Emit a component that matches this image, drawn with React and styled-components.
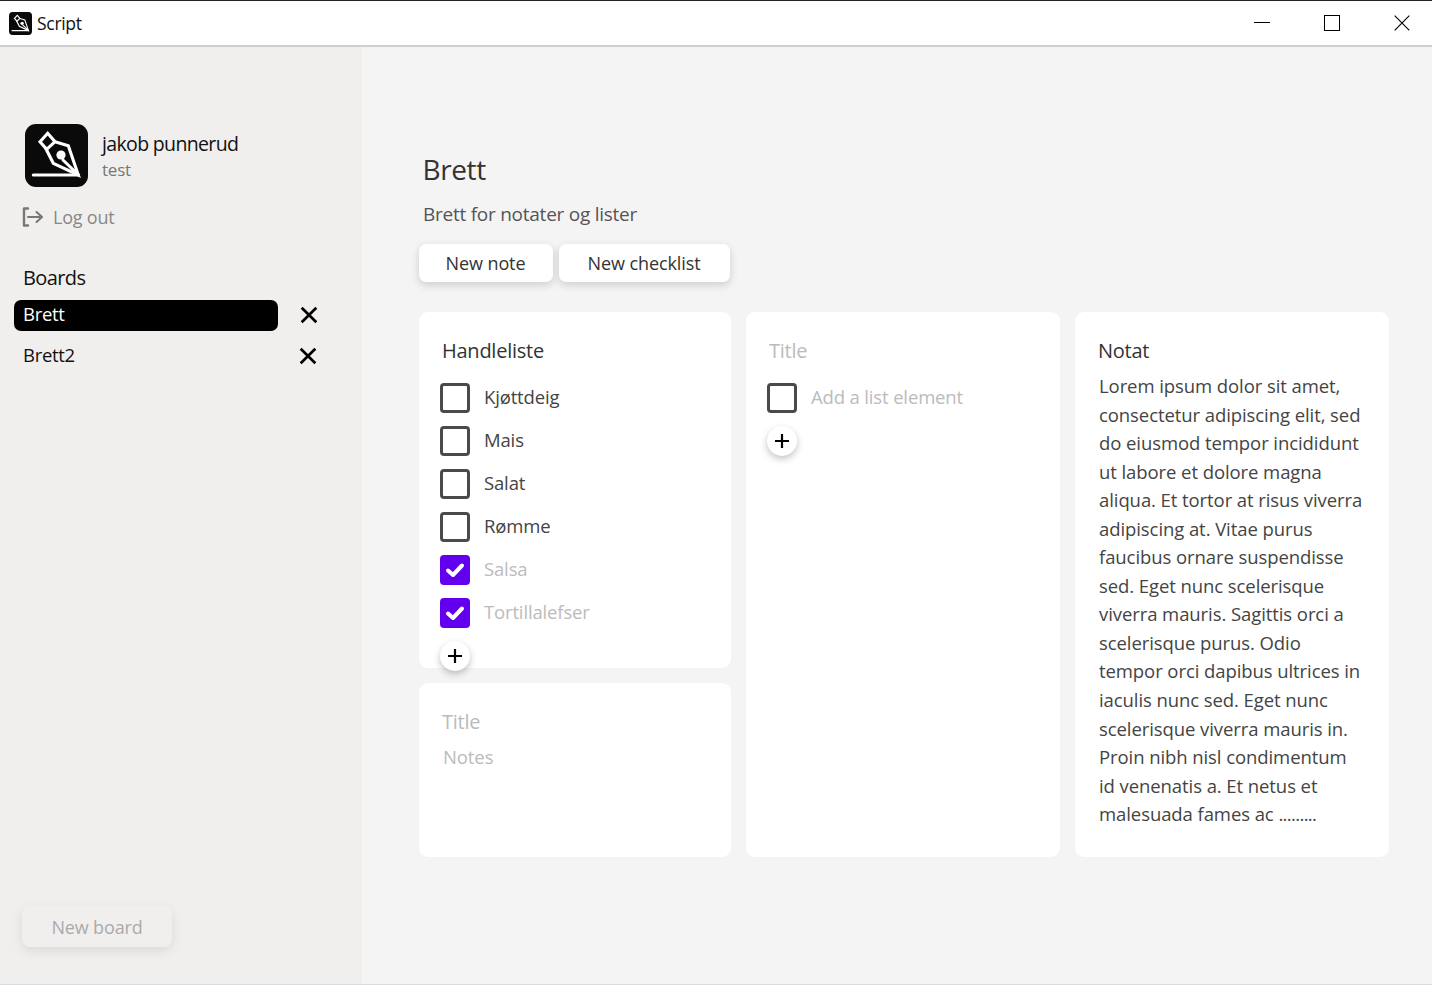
import React from "react";
import styled, { createGlobalStyle } from "styled-components";

const GlobalStyle = createGlobalStyle`
  html, body {
    margin: 0;
    padding: 0;
    height: 100%;
    font-family: "Open Sans", "Noto Sans", sans-serif;
  }
  * {
    box-sizing: border-box;
  }
`

const Window = styled.div`
  display: flex;
  flex-direction: column;
  height: 985px;
  width: 1432px;
  overflow: hidden;
  border-top: 1px solid #222;
  border-bottom: 1px solid #dcdcdc;
  background-color: #f4f4f4;
`

const TitleBar = styled.div`
  display: flex;
  align-items: center;
  flex: 0 0 46px;
  padding-left: 9px;
  background-color: white;
  border-bottom: 2px solid #cfcfcf;
`

const AppName = styled.span`
  margin-left: 5px;
  font-size: 17.5px;
  letter-spacing: -0.3px;
  color: #111;
`

const WindowButtons = styled.div`
  display: flex;
  margin-left: auto;
`

const WindowButton = styled.div`
  display: flex;
  align-items: center;
  justify-content: center;
  width: 70px;
  height: 43px;
  padding-left: 10px;
`

const Body = styled.div`
  display: flex;
  flex: 1;
  min-height: 0;
`

const Sidebar = styled.aside`
  display: flex;
  flex-direction: column;
  width: 362px;
  padding: 77px 0 37px 0;
  background-color: #f0efee;
`

const Profile = styled.div`
  display: flex;
  align-items: center;
  padding-left: 25px;
`

const ProfileText = styled.div`
  display: flex;
  flex-direction: column;
  margin-left: 14px;
  padding-top: 1px;
`

const UserName = styled.span`
  font-size: 19.5px;
  line-height: 27px;
  letter-spacing: -0.65px;
  color: #111;
`

const UserSub = styled.span`
  font-size: 17px;
  line-height: 25px;
  letter-spacing: -0.2px;
  color: #777;
`

const LogOut = styled.div`
  display: flex;
  align-items: center;
  gap: 10px;
  margin: 16px 0 0 22px;
  font-size: 18px;
  line-height: 28px;
  letter-spacing: -0.2px;
  color: #888;
`

const BoardsTitle = styled.h2`
  margin: 32px 0 7px 23px;
  font-size: 20px;
  line-height: 30px;
  font-weight: 400;
  letter-spacing: -0.6px;
  color: #111;
`

const BoardRow = styled.div`
  display: flex;
  align-items: center;
  margin: 0 0 10px 14px;
`

const BoardName = styled.div`
  width: 264px;
  height: 31px;
  padding-left: 9px;
  border-radius: 7px;
  font-size: 18.5px;
  line-height: 28px;
  letter-spacing: -0.3px;
  background-color: ${props => props.active ? `black` : `transparent`};
  color: ${props => props.active ? `white` : `#111`};
`

const RemoveBoard = styled.div`
  display: flex;
  margin-left: ${props => props.offset}px;
  margin-bottom: 2px;
`

const NewBoard = styled.div`
  display: flex;
  align-items: center;
  justify-content: center;
  width: 150px;
  height: 41px;
  margin: auto 0 0 22px;
  border-radius: 8px;
  font-size: 18px;
  letter-spacing: -0.15px;
  color: #aaa;
  background-color: #f0efee;
  box-shadow: 0 4px 12px rgba(0, 0, 0, 0.09);
`

const Main = styled.main`
  flex: 1;
  padding: 102px 0 0 57px;
`

const Heading = styled.h1`
  margin: 0 0 0 3.5px;
  font-size: 28px;
  line-height: 40px;
  font-weight: 400;
  letter-spacing: -0.4px;
  color: #333;
`

const SubHeading = styled.p`
  margin: 10px 0 0 4px;
  font-size: 19px;
  line-height: 30px;
  letter-spacing: -0.25px;
  color: #555;
`

const Actions = styled.div`
  display: flex;
  gap: 6px;
  margin-top: 15px;
`

const ActionButton = styled.button`
  width: ${props => props.width}px;
  height: 38px;
  padding: 0 1px 0 0;
  border: none;
  border-radius: 7px;
  font-family: inherit;
  font-size: 18px;
  letter-spacing: -0.1px;
  color: #333;
  background-color: white;
  box-shadow: 0 3px 8px rgba(0, 0, 0, 0.16);
`

const Grid = styled.div`
  display: grid;
  grid-template-columns: 312px 314px 314px;
  column-gap: 15px;
  height: 545px;
  margin-top: 30px;
`

const Column = styled.div`
  display: flex;
  flex-direction: column;
  gap: 15px;
`

const Card = styled.section`
  flex: ${props => props.grow ? 1 : `0 0 auto`};
  height: ${props => props.height ? `${props.height}px` : `auto`};
  padding: 24px 21px 0 21px;
  border-radius: 9px;
  background-color: white;
`

const CardTitle = styled.div`
  height: 30px;
  margin-left: 2px;
  font-size: 20px;
  line-height: 30px;
  letter-spacing: -0.25px;
  color: ${props => props.muted ? `#bbb` : `#333`};
`

const Rows = styled.div`
  display: flex;
  flex-direction: column;
  gap: 13px;
  margin-top: 17px;
`

const Row = styled.div`
  display: flex;
  align-items: center;
  gap: 14px;
`

const Checkbox = styled.div`
  display: flex;
  align-items: center;
  justify-content: center;
  width: 30px;
  height: 30px;
  border: ${props => props.checked ? `none` : `3px solid #4a4a4a`};
  border-radius: 4px;
  background-color: ${props => props.checked ? `#6200ee` : `white`};
`

const RowText = styled.span`
  margin-bottom: 4px;
  font-size: 18.5px;
  letter-spacing: -0.15px;
  color: ${props => props.muted ? `#bbb` : `#444`};
`

const AddButton = styled.div`
  display: flex;
  align-items: center;
  justify-content: center;
  width: 30px;
  height: 30px;
  margin-top: 13px;
  border-radius: 50%;
  background-color: white;
  box-shadow: 0 3px 7px rgba(0, 0, 0, 0.24);
`

const NotePlaceholder = styled.div`
  margin: 5px 0 0 3px;
  font-size: 18.5px;
  line-height: 30px;
  letter-spacing: -0.1px;
  color: #bbb;
`

const NoteBody = styled.div`
  margin: 6px 0 0 3px;
  font-size: 18.5px;
  line-height: 28.55px;
  letter-spacing: -0.08px;
  color: #444;
`

const NoteLine = styled.div`
  white-space: nowrap;
`

const NoteDots = styled.span`
  letter-spacing: -0.65px;
`

const noteLines = [
	"Lorem ipsum dolor sit amet,",
	"consectetur adipiscing elit, sed",
	"do eiusmod tempor incididunt",
	"ut labore et dolore magna",
	"aliqua. Et tortor at risus viverra",
	"adipiscing at. Vitae purus",
	"faucibus ornare suspendisse",
	"sed. Eget nunc scelerisque",
	"viverra mauris. Sagittis orci a",
	"scelerisque purus. Odio",
	"tempor orci dapibus ultrices in",
	"iaculis nunc sed. Eget nunc",
	"scelerisque viverra mauris in.",
	"Proin nibh nisl condimentum",
	"id venenatis a. Et netus et",
]

const shopping = [
	{ text: "Kjøttdeig", done: false },
	{ text: "Mais", done: false },
	{ text: "Salat", done: false },
	{ text: "Rømme", done: false },
	{ text: "Salsa", done: true },
	{ text: "Tortillalefser", done: true },
]

function PenLogo({ size, radius }) {
	return (
		<svg width={size} height={size} viewBox="0 0 63 63">
			<rect width="63" height="63" rx={radius} fill="#0a0a0a" />
			<g fill="none" stroke="white" strokeWidth="3.1" strokeLinejoin="miter" strokeLinecap="round">
				<path d="M15 17.7 L22.7 9.3 L30 17.7 L21.7 25.3 Z" />
				<path d="M20.7 24.3 L28.3 39.3 L53.3 51 L43.3 21.7 L30 17.7" />
				<path d="M8.3 51 H53.3" />
				<path d="M53 50.5 L38 36" />
			</g>
			<circle cx="36" cy="31" r="4.6" fill="white" />
		</svg>
	)
}

function CloseIcon({ size = 18, width = 2.4, color = "black" }) {
	return (
		<svg width={size} height={size} viewBox="0 0 16 16">
			<path d="M1.5 1.5 L14.5 14.5 M14.5 1.5 L1.5 14.5" stroke={color} strokeWidth={width} fill="none" />
		</svg>
	)
}

function PlusIcon() {
	return (
		<svg width="16" height="16" viewBox="0 0 16 16">
			<path d="M8 1 V15 M1 8 H15" stroke="black" strokeWidth="2.2" fill="none" />
		</svg>
	)
}

function CheckIcon() {
	return (
		<svg width="20" height="16" viewBox="0 0 20 16">
			<path d="M3 8.5 L8 13 L17 3.5" stroke="white" strokeWidth="4" fill="none" strokeLinecap="round" strokeLinejoin="round" />
		</svg>
	)
}

function LogOutIcon() {
	return (
		<svg width="21" height="20" viewBox="0 0 21 20">
			<path d="M6 1.5 H2 V18.5 H6" stroke="#777" strokeWidth="2.4" fill="none" strokeLinecap="round" strokeLinejoin="round" />
			<path d="M6 10 H20 M14.5 5 L20 10 L14.5 15" stroke="#777" strokeWidth="2" fill="none" strokeLinecap="round" />
		</svg>
	)
}

export default function App() {
	return (
		<Window>
			<GlobalStyle />
			<TitleBar>
				<PenLogo size={23} radius={10} />
				<AppName>Script</AppName>
				<WindowButtons>
					<WindowButton>
						<svg width="16" height="16" viewBox="0 0 16 16"><path d="M0 7.5 H16" stroke="black" strokeWidth="1" /></svg>
					</WindowButton>
					<WindowButton>
						<svg width="16" height="16" viewBox="0 0 16 16"><rect x="0.5" y="0.5" width="15" height="15" stroke="black" fill="none" /></svg>
					</WindowButton>
					<WindowButton>
						<CloseIcon size={18} width={1} />
					</WindowButton>
				</WindowButtons>
			</TitleBar>
			<Body>
				<Sidebar>
					<Profile>
						<PenLogo size={63} radius={11} />
						<ProfileText>
							<UserName>jakob punnerud</UserName>
							<UserSub>test</UserSub>
						</ProfileText>
					</Profile>
					<LogOut>
						<LogOutIcon />
						Log out
					</LogOut>
					<BoardsTitle>Boards</BoardsTitle>
					<BoardRow>
						<BoardName active>Brett</BoardName>
						<RemoveBoard offset={22}><CloseIcon /></RemoveBoard>
					</BoardRow>
					<BoardRow>
						<BoardName>Brett2</BoardName>
						<RemoveBoard offset={21}><CloseIcon /></RemoveBoard>
					</BoardRow>
					<NewBoard>New board</NewBoard>
				</Sidebar>
				<Main>
					<Heading>Brett</Heading>
					<SubHeading>Brett for notater og lister</SubHeading>
					<Actions>
						<ActionButton width={134}>New note</ActionButton>
						<ActionButton width={171}>New checklist</ActionButton>
					</Actions>
					<Grid>
						<Column>
							<Card height={356}>
								<CardTitle>Handleliste</CardTitle>
								<Rows>
									{shopping.map(item => (
										<Row key={item.text}>
											<Checkbox checked={item.done}>{item.done && <CheckIcon />}</Checkbox>
											<RowText muted={item.done}>{item.text}</RowText>
										</Row>
									))}
								</Rows>
								<AddButton><PlusIcon /></AddButton>
							</Card>
							<Card grow>
								<CardTitle muted>Title</CardTitle>
								<NotePlaceholder>Notes</NotePlaceholder>
							</Card>
						</Column>
						<Column>
							<Card grow>
								<CardTitle muted>Title</CardTitle>
								<Rows>
									<Row>
										<Checkbox />
										<RowText muted>Add a list element</RowText>
									</Row>
								</Rows>
								<AddButton><PlusIcon /></AddButton>
							</Card>
						</Column>
						<Column>
							<Card grow>
								<CardTitle>Notat</CardTitle>
								<NoteBody>
									{noteLines.map(line => <NoteLine key={line}>{line}</NoteLine>)}
									<NoteLine>malesuada fames ac <NoteDots>.........</NoteDots></NoteLine>
								</NoteBody>
							</Card>
						</Column>
					</Grid>
				</Main>
			</Body>
		</Window>
	)
}
